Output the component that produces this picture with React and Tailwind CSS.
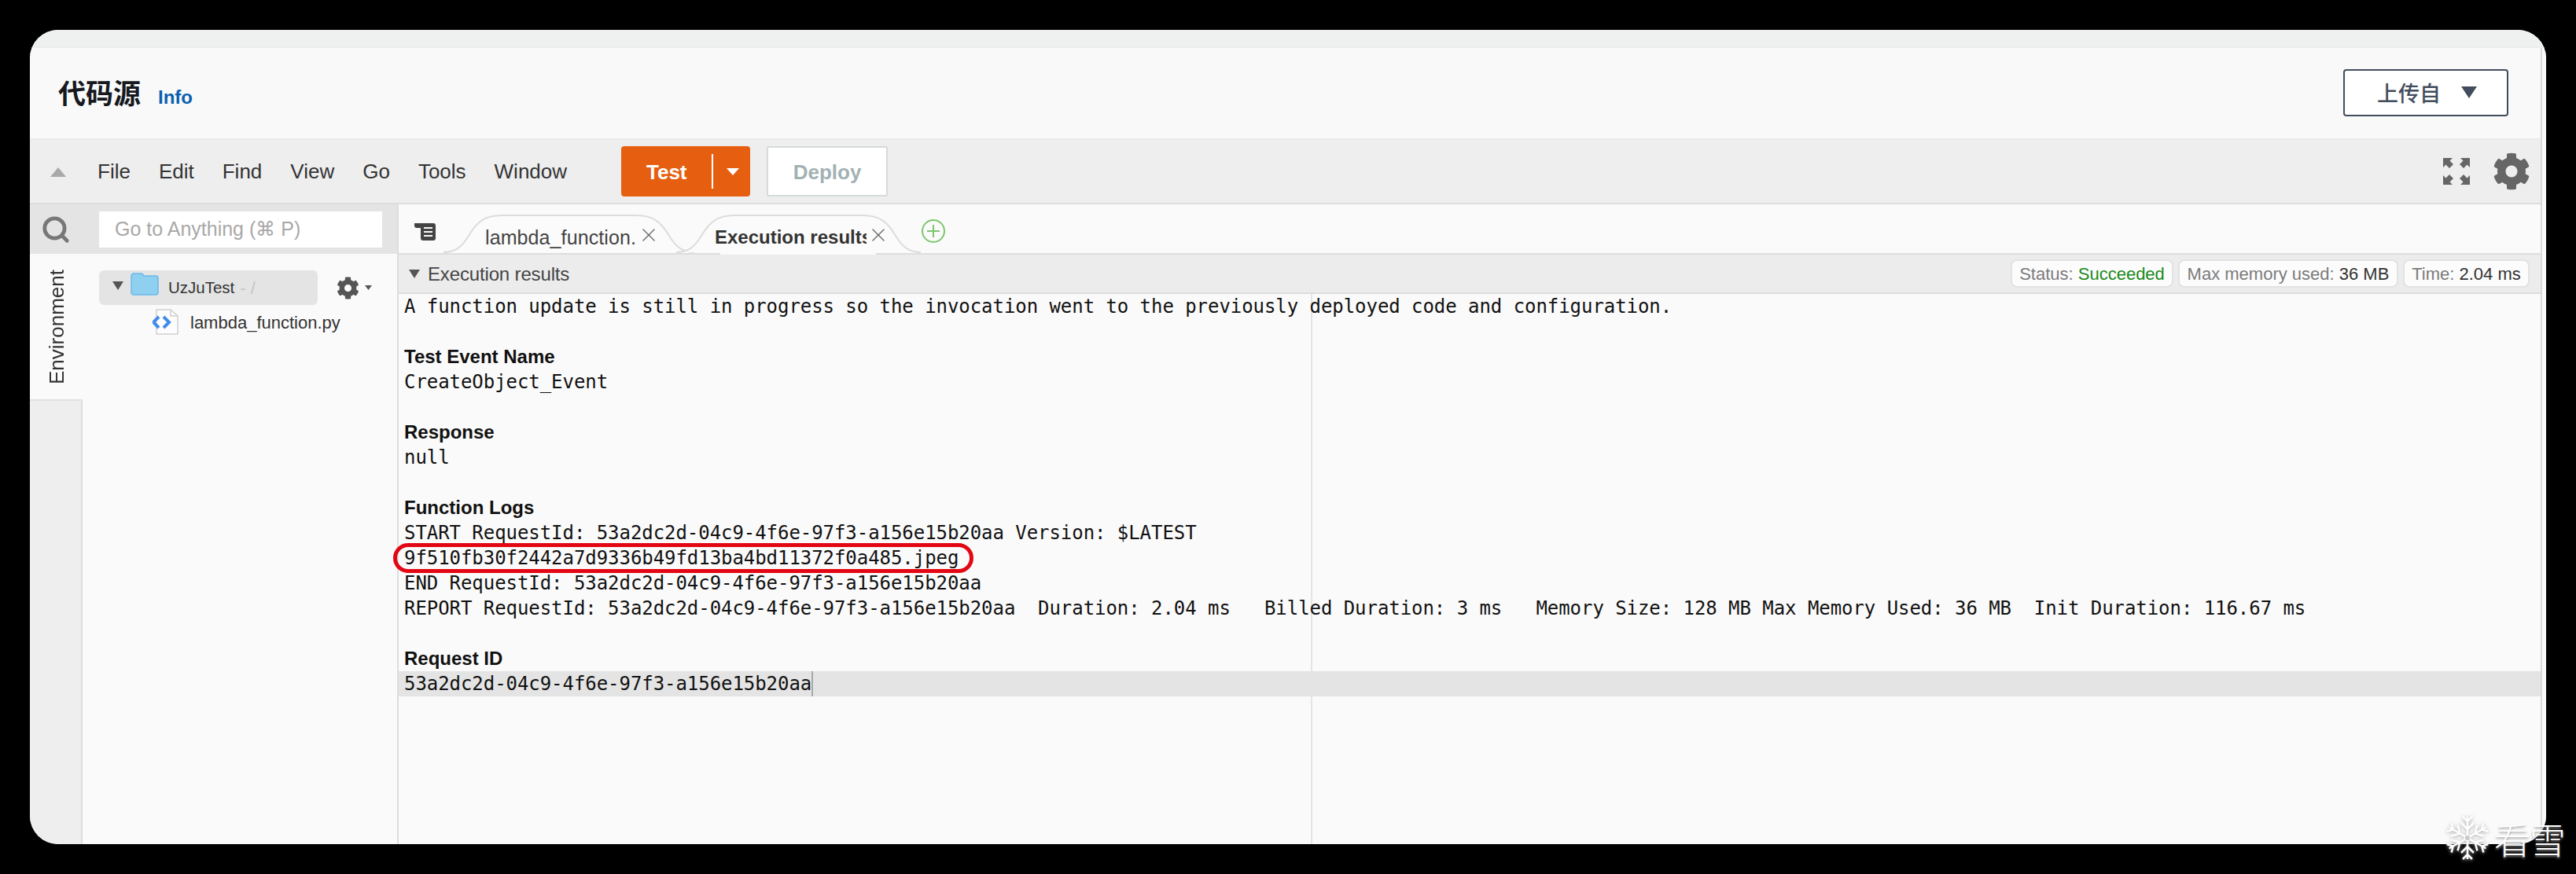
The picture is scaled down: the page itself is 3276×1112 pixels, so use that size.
import React from "react";
import { FaCog } from "react-icons/fa";
import { Search, X } from "lucide-react";

const Tri = ({ className }) => (
  <svg viewBox="0 0 20 14" className={className} preserveAspectRatio="none"><path d="M0 0H20L10 14Z" fill="currentColor" /></svg>
);

const lines = [
  { t: "A function update is still in progress so the invocation went to the previously deployed code and configuration." },
  { t: "" },
  { t: "Test Event Name", b: true },
  { t: "CreateObject_Event" },
  { t: "" },
  { t: "Response", b: true },
  { t: "null" },
  { t: "" },
  { t: "Function Logs", b: true },
  { t: "START RequestId: 53a2dc2d-04c9-4f6e-97f3-a156e15b20aa Version: $LATEST" },
  { t: "9f510fb30f2442a7d9336b49fd13ba4bd11372f0a485.jpeg", oval: true },
  { t: "END RequestId: 53a2dc2d-04c9-4f6e-97f3-a156e15b20aa" },
  { t: "REPORT RequestId: 53a2dc2d-04c9-4f6e-97f3-a156e15b20aa  Duration: 2.04 ms   Billed Duration: 3 ms   Memory Size: 128 MB Max Memory Used: 36 MB  Init Duration: 116.67 ms" },
  { t: "" },
  { t: "Request ID", b: true },
  { t: "53a2dc2d-04c9-4f6e-97f3-a156e15b20aa", active: true },
];

function TabShape({ w }) {
  return (
    <svg width={w} height="50" viewBox={`0 0 ${w} 50`} className="absolute left-0 top-0">
      <path d={`M0 48C16 48 24 40 32 27C42 10 52 1 74 1H${w - 74}C${w - 52} 1 ${w - 42} 10 ${w - 32} 27C${w - 24} 40 ${w - 16} 48 ${w} 48`} fill="#fbfbfb" stroke="#dcdcdc" strokeWidth="2" />
    </svg>
  );
}

function Expand() {
  return (
    <svg width="34" height="34" viewBox="0 0 34 34" fill="#666">
      <path d="M0 0H12L8.5 3.5L13 8L8 13L3.500 8.500L0 12Z" />
      <path d="M34 0H22L25.500 3.500L21 8L26 13L30.500 8.500L34 12Z" />
      <path d="M0 34H12L8.500 30.500L13 26L8 21L3.500 25.500L0 22Z" />
      <path d="M34 34H22L25.500 30.500L21 26L26 21L30.500 25.500L34 22Z" />
    </svg>
  );
}

function Snow() {
  const arm = (
    <g>
      <path d="M30 30V3M30 9L24 3M30 9L36 3M30 19L22 11M30 19L38 11" />
    </g>
  );
  return (
    <svg width="60" height="60" viewBox="0 0 60 60" fill="none" stroke="#fff" strokeWidth="2.500" className="drop-shadow-[0_1px_2px_rgba(160,160,160,0.9)]">
      {[0, 60, 120, 180, 240, 300].map((a) => (
        <g key={a} transform={`rotate(${a} 30 30)`}>{arm}</g>
      ))}
      <circle cx="30" cy="30" r="4" fill="#ccc" stroke="#fff" strokeWidth="1.500" />
    </svg>
  );
}

const Badge = ({ children, className }) => (
  <div className={`h-[36px] flex items-center justify-center rounded-[8px] border-2 border-[#e2e2e2] bg-[#fcfcfc] text-[22px] whitespace-pre text-[#7b7b7b] ${className}`}>{children}</div>
);

export default function App() {
  return (
    <div className="relative w-[3276px] h-[1112px] bg-black pt-[38px] px-[38px] font-['Liberation_Sans',Arial,sans-serif] overflow-hidden">
      <div className="w-[3200px] h-[1036px] rounded-[36px] overflow-hidden flex flex-col bg-[#fafafa]">
        <div className="h-[23px] shrink-0 bg-[#eff1f1] border-b-2 border-[#ebeded]" />
        <div className="flex-1 flex min-h-0">
          <div className="flex-1 min-w-0 flex flex-col">
            {/* header */}
            <div className="h-[117px] shrink-0 bg-[#f9f9f9] flex items-center justify-between pl-[36px] pr-[41px] border-b-2 border-[#ebebeb]">
              <div className="flex items-baseline mt-[4px]">
                <span className="text-[35px] font-bold text-[#16191f] font-['Noto_Sans_CJK_SC',sans-serif] leading-none">代码源</span>
                <span className="ml-[22px] text-[24px] font-bold text-[#0a5fb0]">Info</span>
              </div>
              <div className="w-[210px] h-[60px] mt-[-2px] rounded-[4px] border-2 border-[#414d5c] bg-white flex items-center text-[#414d5c] pl-[41px]">
                <span className="text-[27px] leading-none font-medium font-['Noto_Sans_CJK_SC',sans-serif]">上传自</span>
                <Tri className="ml-[26px] w-[20px] h-[15px]" />
              </div>
            </div>
            {/* toolbar */}
            <div className="h-[82px] shrink-0 bg-[#eeeeee] border-b-2 border-[#dddddd] flex items-center relative">
              <svg width="20" height="12" viewBox="0 0 20 12" className="ml-[26px] mt-[2px] shrink-0"><path d="M10 0L20 12H0Z" fill="#a9a9a9" /></svg>
              <div className="ml-[40px] w-[666px] shrink-0 flex gap-[36px] text-[26px] text-[#333333]">
                {["File", "Edit", "Find", "View", "Go", "Tools", "Window"].map((m) => (
                  <span key={m}>{m}</span>
                ))}
              </div>
              <div className="w-[164px] h-[64px] rounded-[4px] bg-[#e65f11] flex items-center text-white shrink-0">
                <span className="ml-[32px] mt-[2px] w-[83px] text-[26px] font-bold">Test</span>
                <div className="w-[2px] h-[44px] bg-white" />
                <Tri className="ml-[17px] w-[16px] h-[9px]" />
              </div>
              <div className="ml-[21px] w-[154px] h-[64px] pt-[2px] rounded-[3px] border-2 border-[#d5dbdb] bg-white flex items-center justify-center text-[26px] font-bold text-[#a2b1b3] shrink-0">Deploy</div>
              <div className="ml-auto mr-[13px] flex items-center gap-[29px] text-[#666666]">
                <Expand />
                <FaCog size={48} />
              </div>
            </div>
            {/* body */}
            <div className="flex-1 flex min-h-0">
              {/* left pane */}
              <div className="w-[467px] shrink-0 flex flex-col">
                <div className="h-[63px] shrink-0 bg-[#e4e4e4] flex items-center">
                  <Search size={38} strokeWidth={3} className="ml-[14px] text-[#777777] shrink-0" />
                  <div className="ml-[36px] w-[360px] h-[46px] bg-white flex items-center pl-[20px] text-[25px] text-[#a8a8a8]">Go to Anything (⌘ P)</div>
                </div>
                <div className="flex-1 flex min-h-0">
                  <div className="w-[67px] shrink-0 flex flex-col">
                    <div className="h-[187px] bg-[#fafafa] border-b-2 border-[#e0e0e0] flex justify-center pt-[20px]">
                      <span className="[writing-mode:vertical-rl] rotate-180 text-[26px] leading-none text-[#333333] h-[146px]">Environment</span>
                    </div>
                    <div className="flex-1 bg-[#eeeeee] border-r-2 border-[#dddddd]" />
                  </div>
                  <div className="flex-1 pl-[21px] pt-[21px]">
                    <div className="flex items-center">
                      <div className="w-[278px] h-[44px] rounded-[6px] bg-[#e4e4e4] flex items-center">
                        <Tri className="ml-[17px] w-[14px] h-[11px] mt-[-5px] text-[#555555]" />
                        <svg width="36" height="29" viewBox="0 0 36 29" className="ml-[9px] mt-[-9px]"><path d="M1 5C1 3 2 1 4 1H13C15 1 16 2 17 4H32C34 4 35 5 35 7V25C35 27 34 28 32 28H4C2 28 1 27 1 25Z" fill="#8fd0f1" stroke="#6bb9e8" strokeWidth="1.500" /></svg>
                        <span className="ml-[12px] text-[20.500px] text-[#333333]">UzJuTest</span>
                        <span className="ml-[7px] text-[22px] text-[#c4c4c4]">- /</span>
                      </div>
                      <FaCog size={29} className="ml-[24px] text-[#555555]" />
                      <Tri className="ml-[7px] w-[9px] h-[6px] text-[#555555]" />
                    </div>
                    <div className="flex items-center mt-[4px] ml-[68px]">
                      <svg width="34" height="33" viewBox="0 0 34 33" className="shrink-0">
                        <path d="M5 1H23L32 9V32H5Z" fill="#fdfdfd" stroke="#cfcfcf" strokeWidth="1.500" />
                        <path d="M23 1V9H32" fill="none" stroke="#cfcfcf" strokeWidth="1.500" />
                        <path d="M8 10L1 17L8 24M14 10L21 17L14 24" fill="none" stroke="#3f8ceb" strokeWidth="4" />
                      </svg>
                      <span className="ml-[14px] mt-[2px] text-[22px] text-[#333333]">lambda_function.py</span>
                    </div>
                  </div>
                </div>
              </div>
              {/* editor */}
              <div className="flex-1 min-w-0 flex flex-col border-l-2 border-[#dddddd]">
                <div className="h-[62px] shrink-0 bg-[#fafafa] flex relative">
                  <svg width="29" height="24" viewBox="0 0 29 24" className="ml-[19px] mt-[23px] shrink-0">
                    <path d="M1 1H25C27 1 28 2 28 4V20C28 22 27 23 25 23H12C10 23 9 22 9 20V7H4C2 7 1 6 1 4Z" fill="#444444" />
                    <path d="M13 7H24M13 12H24M13 17H24" stroke="#fafafa" strokeWidth="2" />
                  </svg>
                  <div className="relative ml-[9px] mt-[13px] w-[319px] h-[49px] shrink-0 text-[25px] text-[#444444]">
                    <TabShape w={319} />
                    <span className="absolute left-[53px] top-[11px] w-[193px] overflow-hidden whitespace-nowrap tracking-[0.1px]">lambda_function.</span>
                    <X size={28} strokeWidth={1.2} className="absolute left-[247px] top-[12px] text-[#666666]" />
                  </div>
                  <div className="relative ml-[-23px] mt-[13px] w-[311px] h-[49px] shrink-0 text-[24px] font-bold text-[#333333]">
                    <TabShape w={311} />
                    <span className="absolute left-[49px] top-[11px] w-[193px] overflow-hidden whitespace-nowrap">Execution results</span>
                    <X size={28} strokeWidth={1.2} className="absolute left-[243px] top-[12px] text-[#666666]" />
                    <div className="absolute left-[56px] right-[57px] bottom-[-2px] h-[3px] bg-[#fbfbfb]" />
                  </div>
                  <svg width="30" height="30" viewBox="0 0 30 30" className="ml-[1px] mt-[19px] shrink-0" fill="none" stroke="#7ec56e" strokeWidth="2"><circle cx="15" cy="15" r="14" /><path d="M15 7V23M7 15H23" /></svg>
                </div>
                <div className="h-[52px] shrink-0 bg-[#ececec] border-y-2 border-[#dddddd] flex items-center">
                  <Tri className="ml-[13px] w-[14px] h-[11px] text-[#555555]" />
                  <span className="ml-[10px] mt-[2px] text-[24px] text-[#444444] tracking-[-0.15px]">Execution results</span>
                  <div className="ml-auto mr-[14px] flex gap-[6px]">
                    <Badge className="w-[207px]">Status: <span className="text-[#1a8a1a]">Succeeded</span></Badge>
                    <Badge className="w-[280px]">Max memory used: <span className="text-[#333333]">36 MB</span></Badge>
                    <Badge className="w-[161px]">Time: <span className="text-[#333333]">2.04 ms</span></Badge>
                  </div>
                </div>
                <div className="relative flex-1 min-h-0 bg-[#fafafa]">
                  <div className="absolute top-0 bottom-0 left-[1160px] w-[2px] bg-[#e4e4e4]" />
                  <div className="relative">
                    {lines.map((l, i) => (
                      <div key={i} className={`relative h-[32px] leading-[32px] pl-[7px] whitespace-pre text-[#111111] ${l.b ? "font-bold text-[24px]" : "font-['DejaVu_Sans_Mono',monospace] text-[24px] tracking-[-0.055px]"} ${l.active ? "bg-[#e4e4e4]" : ""}`}>
                        {l.t}
                        {l.active && <span className="inline-block align-top w-[2px] h-[32px] bg-[#a8a8a8]" />}
                        {l.oval && <div className="absolute left-[-7px] top-[-3px] w-[738px] h-[38px] rounded-full border-[5px] border-[#e30613]" />}
                      </div>
                    ))}
                  </div>
                </div>
              </div>
            </div>
          </div>
          <div className="w-[7px] shrink-0 border-l-2 border-[#d9d9d9] bg-[#fafafa]" />
        </div>
      </div>
      <div className="absolute left-[3108px] top-[1036px] flex items-center">
        <Snow />
        <span className="ml-[4px] text-[46px] leading-none font-light tracking-[-1px] text-white font-['Noto_Sans_CJK_SC',sans-serif] [text-shadow:0_2px_3px_rgba(150,150,150,0.9)]">看雪</span>
      </div>
    </div>
  );
}
